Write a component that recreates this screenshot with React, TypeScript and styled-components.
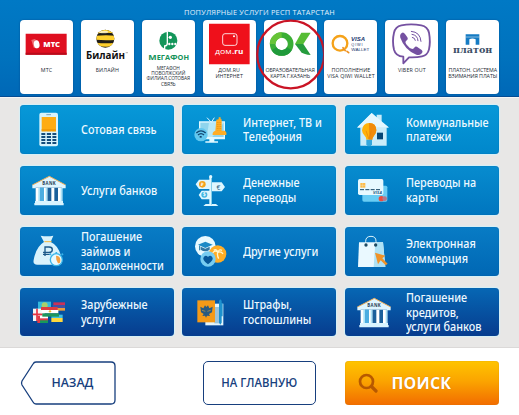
import React from "react";
import styled, { createGlobalStyle } from "styled-components";

const Global = createGlobalStyle`
  * { box-sizing: border-box; }
  body { margin: 0; background: #fff; font-family: "Open Sans", "Noto Sans", sans-serif; }
`;

const Screen = styled.main`
  width: 519px;
  height: 415px;
  display: flex;
  flex-direction: column;
  overflow: hidden;
`;

const Popular = styled.header`
  height: 97px;
  flex: none;
  padding: 7px 20px 0;
  background: linear-gradient(#0079c5, #0072bd 60%, #0068b7);
  border-bottom: 1.5px solid #064c93;
`;

const PopularTitle = styled.h1`
  margin: 0 0 3px;
  height: 10px;
  color: #e3f1fc;
  font-size: 7.4px;
  line-height: 10px;
  font-weight: 500;
  letter-spacing: 0.19px;
  text-align: center;
`;

const CardRow = styled.div`
  display: grid;
  grid-template-columns: repeat(8, 53px);
  column-gap: 7.9px;
`;

const Card = styled.article`
  position: relative;
  height: 74px;
  background: #fff;
  border-radius: 4px;
  box-shadow: 0 0 2px #004d91;
`;

const Logo = styled.svg`
  display: block;
  width: 53px;
  height: 46.4px;
`;

const Caption = styled.p<{ $spacing: number; $dense?: boolean }>`
  margin: ${(p) => (p.$dense ? "-0.5px" : "0.7px")} -3px 0;
  color: #222a33;
  font-size: ${(p) => (p.$dense ? 4.8 : 5.3)}px;
  line-height: ${(p) => (p.$dense ? 5.2 : 6.3)}px;
  letter-spacing: ${(p) => p.$spacing}px;
  text-align: center;
  white-space: pre;
`;

const Ring = styled.svg`
  position: absolute;
  left: -6px;
  top: -2px;
  width: 70px;
  height: 74px;
  overflow: visible;
`;

const Services = styled.section`
  height: 251px;
  flex: none;
  padding: 7.3px 20.2px 0;
  background: #e8e7e6;
  border-top: 1px solid #f5f5f5;
  border-bottom: 1px solid #dbd9d8;
  display: grid;
  grid-template-columns: repeat(3, 154px);
  grid-auto-rows: 48.5px;
  column-gap: 8.3px;
  row-gap: 12.4px;
`;

const tones = [
  ["#0798d8", "#0087cb"],
  ["#078ccf", "#0076bf"],
  ["#087cc5", "#0067b4"],
  ["#0667b4", "#073c8e"],
];

const Tile = styled.button<{ $row: number }>`
  display: flex;
  align-items: center;
  padding: 0;
  border: 0;
  border-radius: 4px;
  background: linear-gradient(${(p) => tones[p.$row][0]}, ${(p) => tones[p.$row][1]});
  box-shadow: inset 0 0 1px #004f9b, 0 0 1px 0.5px #d5f0f7;
  text-align: left;
`;

const TileIcon = styled.svg`
  flex: none;
  width: 61px;
  height: 49px;
`;

const TileLabel = styled.span`
  padding-top: 1.4px;
  color: #eef9ff;
  font-family: "Noto Sans", "Open Sans", sans-serif;
  font-size: 12px;
  font-weight: 500;
  line-height: 14.7px;
  white-space: pre;
  transform: scaleX(0.9);
  transform-origin: left center;
`;

const Actions = styled.nav`
  flex: 1;
  display: flex;
  padding: 13px 20px 0;
`;

const OutlineButton = styled.button`
  flex: none;
  width: 113px;
  height: 44px;
  margin: 0 29px 0 87px;
  padding: 0;
  border: 1.5px solid #173f7e;
  border-radius: 5px;
  background: #fff;
  color: #173f7e;
  font: 600 12.3px/1 "Open Sans", sans-serif;
`;

const ButtonText = styled.span`
  display: inline-block;
  white-space: nowrap;
  transform: scaleX(0.92);
`;

const BackButton = styled.button`
  position: relative;
  flex: none;
  width: 96px;
  height: 44px;
  padding: 0 0 0 9px;
  border: 0;
  background: none;
  color: #173f7e;
  font: 600 12.3px/1 "Open Sans", sans-serif;
`;

const BackOutline = styled.svg`
  position: absolute;
  inset: 0;
  width: 96px;
  height: 44px;
`;

const SearchButton = styled.button`
  flex: none;
  width: 154px;
  height: 44px;
  display: flex;
  align-items: center;
  gap: 13.5px;
  padding: 0 0 0 13px;
  border: 0;
  border-radius: 4px;
  background: linear-gradient(#ffc400, #fba500 45%, #f26c00);
  box-shadow: inset 0 0 1px #c27a00;
  color: #fff;
  font: 700 16px/1 "Open Sans", sans-serif;
  letter-spacing: 0.2px;
  text-shadow: 0 0 1px #c86500;
`;

const SearchIcon = styled.svg`
  width: 20px;
  height: 20px;
`;

const SANS = "Open Sans, sans-serif";

/* Provider logos share a 159 x 139 canvas. */
const MtsLogo = () => (
  <>
    <path fill="#df0f20" d="M17 41h123v63H17z" />
    <path fill="#b90b1b" d="M17 98h123v6H17z" />
    <path fill="#ee6a70" d="M34 60l10-3 9 6-2 22-10-2z" />
    <ellipse cx="50" cy="73" rx="8.500" ry="12" fill="#fff" transform="rotate(-12 50 73)" />
    <text x="70" y="80" fill="#fff" fontFamily={SANS} fontWeight="800" fontSize="19" textLength="50" lengthAdjust="spacingAndGlyphs">МТС</text>
  </>
);

const BeelineLogo = () => (
  <>
    <clipPath id="bee"><circle cx="73" cy="56" r="27" /></clipPath>
    <g clipPath="url(#bee)">
      <path fill="#211e18" d="M40 25h70v65H40z" />
      <path fill="#ffd02d" d="M40 32q33-7 70 0v9q-35-6-70 0zM40 48q35-4 70 0v11q-35 4-70 0zM40 67q35 6 70 0v9q-35 8-70 0z" />
      <ellipse cx="68" cy="36" rx="14" ry="4" fill="#fff" opacity=".65" />
    </g>
    <text x="15" y="117" fill="#111" fontFamily={SANS} fontWeight="700" fontSize="32" textLength="117" lengthAdjust="spacingAndGlyphs">Билайн</text>
    <path stroke="#111" d="M134 98h7" />
  </>
);

const MegafonLogo = () => (
  <>
    <circle cx="79" cy="62" r="27" fill="#13965a" />
    <path d="M76 35v35a8 8 0 0 1-8 8v10" stroke="#fff" strokeWidth="4" fill="none" />
    <circle cx="85" cy="52" r="5" fill="#fff" />
    <g fill="#fff"><circle cx="82" cy="72" r="3.500" /><circle cx="91" cy="72" r="3.500" /><circle cx="100" cy="72" r="3.500" /></g>
    <text x="19" y="119" fill="#15925a" fontFamily={SANS} fontWeight="700" fontSize="23" textLength="122" lengthAdjust="spacingAndGlyphs">М<tspan fontSize="19">ЕГА</tspan>Ф<tspan fontSize="19">ОН</tspan></text>
  </>
);

const DomLogo = () => (
  <>
    <path fill="#ef101b" d="M18 11h122v122H18z" />
    <rect x="59" y="41" width="43" height="35" rx="7" fill="none" stroke="#fff" strokeWidth="2.500" />
    <circle cx="93" cy="49" r="3" fill="#fff" />
    <text x="36" y="101" fill="#fff" fontFamily={SANS} fontSize="23" textLength="50" lengthAdjust="spacingAndGlyphs">дом</text>
    <text x="87" y="101" fill="#fff" fontFamily={SANS} fontWeight="700" fontSize="23" textLength="34" lengthAdjust="spacingAndGlyphs">.ru</text>
  </>
);

const OkLogo = () => (
  <>
    <circle cx="53" cy="72" r="27" fill="none" stroke="#3aae35" strokeWidth="17" />
    <path d="M26 72a27 27 0 0 1 27-27" fill="none" stroke="#66c437" strokeWidth="17" />
    <path d="M76 86a27 27 0 0 1-46 0" fill="none" stroke="#209a3b" strokeWidth="17" />
    <path fill="#56bd35" d="M112 38h28l-22 34H93z" />
    <path fill="#269c3d" d="M93 72h25l22 33q-20-1-28-8z" />
  </>
);

const QiwiLogo = () => (
  <>
    <circle cx="48" cy="70" r="22" fill="none" stroke="#f5a219" strokeWidth="7" />
    <path stroke="#fff" strokeWidth="3" d="M55 80l11 13" />
    <path stroke="#ed9020" strokeWidth="5" strokeLinecap="round" d="M57 83l7 9M69 94l5 4" />
    <g fill="#22386f" fontFamily="Liberation Sans, sans-serif" fontWeight="700">
      <text x="81" y="62" fontSize="17" fontStyle="italic" textLength="42" lengthAdjust="spacingAndGlyphs">VISA</text>
      <text x="82" y="79" fontSize="11.500" fontWeight="400" textLength="34">QIWI</text>
      <text x="82" y="94" fontSize="11.500" fontWeight="400" textLength="54" lengthAdjust="spacingAndGlyphs">WALLET</text>
    </g>
  </>
);

const ViberLogo = () => (
  <>
    <path d="M49 16q29-6 60 0 19 4 23 22 5 28 0 50-4 17-21 21-16 4-39 3L55 130v-20q-23-2-28-21-6-26 0-51 4-18 22-22z" fill="#fff" stroke="#7551a1" strokeWidth="5.500" strokeLinejoin="round" />
    <path d="M47 42q7-9 13 0l7 10q4 6-4 11-4 4 2 11 8 11 17 13 4 0 7-5 3-5 11 1l10 7q6 5-2 12-5 5-14 2-35-14-48-51-2-6 1-11z" fill="#7551a1" />
    <path d="M79 34q27 2 29 30M81 43q17 2 18 19M82 52q8 1 9 9" fill="none" stroke="#7551a1" strokeWidth="3" strokeLinecap="round" />
  </>
);

const PlatonLogo = () => (
  <>
    <path fill="#157bc3" d="M59 43h41v31H89V58q-10-5-19 0v16H59z" />
    <path stroke="#fff" strokeWidth="1.500" d="M59 51h41" />
    <text x="21" y="99" fill="#3c4f66" fontFamily="DejaVu Serif, serif" fontWeight="700" fontSize="26" textLength="118" lengthAdjust="spacingAndGlyphs">платон</text>
  </>
);

/* Service icons share a 183 x 147 canvas. */
const PhoneIcon = () => (
  <>
    <rect x="58" y="23" width="56" height="101" rx="6" fill="#d8f3fc" />
    <path fill="#ffac13" d="M65 36h43v43H65z" /><path fill="#f39b08" d="M65 72h43v7H65z" />
    <path stroke="#4b7c9f" strokeWidth="2" d="M79 29h14" />
    <g fill="#164d7b">{[84, 93, 102, 111].map((y) => <path key={y} d={`M64 ${y}h12v6H64zM80 ${y}h13v6H80zM97 ${y}h12v6H97z`} />)}</g>
    <path stroke="#d8f3fc" strokeWidth="2" d="M79 80v40M95 80v40" />
  </>
);

const BankIcon = () => (
  <>
    <path fill="#dff5ff" d="M37 57L88 31l49 26v10H37z" />
    <path fill="none" stroke="#efad57" strokeWidth="3" d="M37 57l51-26 49 26" />
    <path fill="#1b609b" d="M47 65h79v44H47z" />
    <path fill="#4cade0" d="M60 65h12v44H60z" />
    <path fill="#fff" d="M47 65h13v45H47zM72 65h10v45H72zM94 65h9v45h-9zM114 65h13v45h-13z" />
    <path fill="#aae2f7" d="M55 65h5v45h-5zM77 65h5v45h-5zM122 65h5v45h-5z" />
    <path fill="#d8f4ff" d="M45 105h84v6h2v7H43v-7h2z" />
    <text x="67" y="58" fill="#263c52" fontFamily={SANS} fontSize="13" fontWeight="700" textLength="40">BANK</text>
  </>
);

const InternetIcon = () => (
  <>
    <path fill="#e0f8ff" d="M51 49h78v54H51zM82 103h15v6h11v4H70v-4h12z" />
    <path fill="#8fd5ed" d="M55 53h70v43H55z" /><path fill="#b7e9f7" d="M81 53h44L91 96H74z" />
    <path d="M75 38l13 14 9-14" stroke="#d9f4ff" strokeWidth="3" fill="none" />
    <path fill="#ffad24" d="M103 44l7-1v-6h6v6h3v34h9q7 3 5 13H92q-2-9 8-13z" />
    <path stroke="#e48b00" strokeWidth="2" strokeDasharray="3 3" d="M106 51v25M111 51v25M116 51v25" />
    <circle cx="57" cy="89" r="20" fill="#62c8ef" />
    <g fill="none" stroke="#10446f" strokeWidth="4"><path d="M43 84q14-13 28 0M48 90q9-8 18 0" /><path strokeWidth="6" d="M56 93v5" /></g>
  </>
);

const HouseIcon = () => (
  <>
    <path fill="#caecf9" d="M36 68L80 24l15 14v-9h15v23l22 16h-7v54H46V68z" />
    <path fill="#e3f7ff" d="M37 67L80 24l51 43H37z" />
    <path fill="#064675" d="M96 83h18v20H96z" />
    <path fill="#ffb20a" d="M72 54q21-1 22 22 0 9-7 16-5 6-5 12H64q0-7-5-12-8-8-8-16 2-21 21-22z" />
    <path fill="#f18b0a" d="M72 54q22 0 22 22 0 9-7 16-5 6-5 12h-9z" />
    <path fill="none" stroke="#e77f08" strokeWidth="2" d="M63 77l9 26 7-26" />
    <path fill="#35a7dc" d="M64 104h17v14l-4 6h-9l-4-6z" />
  </>
);

const SignpostIcon = () => (
  <>
    <circle cx="86" cy="32" r="5" fill="#dff7ff" />
    <path fill="#def7ff" d="M82 34h8v80h12l7 6H64l7-6h11zM51 41h33v28H51L41 55zM86 49h33l10 14-10 13H86zM59 74h25v26H59l-9-13z" />
    <path fill="#83cfe9" d="M87 36h3v80h-3z" />
    <circle cx="61" cy="55" r="10" fill="#f5a31c" /><circle cx="67" cy="86" r="9" fill="#44b7e4" />
    <g fontFamily={SANS} fontWeight="700" textAnchor="middle"><text x="61" y="60" fontSize="13" fill="#fff">₽</text><text x="109" y="71" fontSize="20" fontWeight="500" fill="#285c7d">€</text><text x="67" y="91" fontSize="14" fill="#fff">$</text></g>
  </>
);

const CardsIcon = () => (
  <>
    <rect x="52" y="59" width="75" height="48" rx="5" fill="#69cdf4" />
    <circle cx="109" cy="98" r="8" fill="#ec4d3e" /><circle cx="119" cy="98" r="7" fill="#b6788c" />
    <rect x="39" y="39" width="76" height="48" rx="5" fill="#e7f9ff" />
    <path fill="#ffbb43" d="M46 51h15v14H46z" /><path stroke="#e5f0ef" d="M46 58h15M53 51v14" />
    <path stroke="#164664" strokeWidth="3" strokeDasharray="12 4" d="M45 71h62" />
    <text x="84" y="84" fill="#15527d" fontFamily={SANS} fontStyle="italic" fontWeight="700" fontSize="12" textLength="27">VISA</text>
  </>
);

const MoneyIcon = () => (
  <>
    <path fill="#d8f2fc" d="M62 26q20 4 38 0l-8 19q26 11 34 54 3 14-11 14H52q-14 0-11-14 7-40 31-54z" />
    <path stroke="#f5b73b" strokeWidth="3" d="M73 44h22" />
    <path fill="none" stroke="#1d5989" strokeWidth="4" d="M75 87V60h12q10 0 10 8t-10 8H69M69 82h24" />
    <circle cx="109" cy="98" r="20" fill="#38b4e8" /><circle cx="109" cy="98" r="16" fill="#e7faff" />
    <path fill="#f3a044" d="M109 98l-1-12q12 0 13 12t-7 11z" /><path stroke="#38b4e8" strokeWidth="5" d="M109 75v6M93 80l-4 4M125 80l4 4" />
  </>
);

const OtherIcon = () => (
  <>
    <circle cx="70" cy="58" r="31" fill="#e8faff" />
    <path fill="#1b8ac6" d="M48 53l22-9 22 9-22 10z" /><path fill="#3277a2" d="M56 59l14 6 13-6v9q-13 10-27 0z" />
    <path stroke="#1872a4" strokeWidth="3" d="M53 56v14" />
    <circle cx="107" cy="81" r="26" fill="#ffad26" />
    <path fill="none" stroke="#fff4c9" strokeWidth="4" d="M107 75q-2 11 3 20M108 76q-10-8-16 2M108 76q-5-12-13-6M108 76q3-11 12-6M108 76q10-4 15 5" />
    <circle cx="78" cy="96" r="23" fill="#77cdf1" />
    <path fill="#07599a" d="M78 112q-20-15-12-23 6-6 12 1 6-7 12-1 8 8-12 23z" />
  </>
);

const BagIcon = () => (
  <>
    <path fill="#eaf9ff" d="M42 46h72l7 74H39z" /><path fill="#aee2f5" d="M91 46h23l7 74H86z" />
    <path fill="none" stroke="#d7f2fb" strokeWidth="3" d="M62 55V43q0-15 16-15 15 0 15 15v12" />
    <circle cx="63" cy="54" r="5" fill="#1f4b63" /><circle cx="92" cy="54" r="5" fill="#1f4b63" />
    <path fill="#ef9228" d="M90 77l31 9-9 8 16 16-6 5-15-15-8 12z" />
  </>
);

const FlagsIcon = () => (
  <>
    <path fill="#34b9dd" d="M54 41h39v25H54z" /><circle cx="74" cy="52" r="9" fill="#a8cf6a" />
    <path fill="#c93157" d="M100 43h35v8h-35z" /><path fill="#4351a5" d="M98 51h37v9H98z" /><path fill="#e99b3c" d="M98 60h37v8H98z" />
    <path fill="#f5f7f5" d="M39 62h35v37H39z" /><path stroke="#e73543" strokeWidth="5" d="M38 79h30M51 62v37" />
    <path fill="#3fbfe3" d="M94 80h34v10H94z" /><path fill="#ffd83c" d="M94 90h34v12H94z" />
    <path fill="#e13a46" d="M52 83h32v22H52z" /><path fill="#fff" d="M60 83h24v8H60z" /><path fill="#17995b" d="M60 97h24v8H60z" />
    <path fill="#dd3c41" d="M63 57h50v9H63z" /><path fill="#fff" d="M65 66h50v10H65z" /><path fill="#20965b" d="M67 76h50v10H67z" /><circle cx="90" cy="70" r="3.500" fill="#edb831" />
  </>
);

const FinesIcon = () => (
  <>
    <path fill="#e3f5fc" d="M70 47h54v65H70z" /><path fill="#9bc4db" d="M97 57h16v49H97z" />
    <path fill="#f49a18" d="M46 37h53v66H46z" />
    <path fill="#285a80" d="M55 56l9 5 5-9 4 5 5-5 4 9 10-5-2 17-9 5 3 6-9-1-3 6-3-6-8 1 4-6-8-5z" />
    <path stroke="#ffb02a" strokeWidth="1.500" d="M60 67l10 3M86 67l-10 3" />
    <path fill="#1d91ce" d="M111 38l4-4 4 4v7h3v40h-3v19l-4 6-4-6z" />
  </>
);

const providers = [
  { logo: MtsLogo, caption: "МТС", spacing: 0.1 },
  { logo: BeelineLogo, caption: "БИЛАЙН", spacing: 0.2 },
  { logo: MegafonLogo, caption: "МЕГАФОН\nПОВОЛЖСКИЙ\nФИЛИАЛ.СОТОВАЯ\nСВЯЗЬ", spacing: -0.08, dense: true },
  { logo: DomLogo, caption: "ДОМ.RU\nИНТЕРНЕТ", spacing: 0.1 },
  { logo: OkLogo, caption: "ОБРАЗОВАТЕЛЬНАЯ\nКАРТА Г.КАЗАНЬ", spacing: -0.15, ringed: true },
  { logo: QiwiLogo, caption: "ПОПОЛНЕНИЕ\nVISA QIWI WALLET", spacing: 0.15 },
  { logo: ViberLogo, caption: "VIBER OUT", spacing: 0.15 },
  { logo: PlatonLogo, caption: "ПЛАТОН. СИСТЕМА\nВЗИМАНИЯ ПЛАТЫ", spacing: -0.05 },
];

const services = [
  { icon: PhoneIcon, label: "Сотовая связь" },
  { icon: InternetIcon, label: "Интернет, ТВ и\nТелефония" },
  { icon: HouseIcon, label: "Коммунальные\nплатежи" },
  { icon: BankIcon, label: "Услуги банков" },
  { icon: SignpostIcon, label: "Денежные\nпереводы" },
  { icon: CardsIcon, label: "Переводы на\nкарты" },
  { icon: MoneyIcon, label: "Погашение\nзаймов и\nзадолженности" },
  { icon: OtherIcon, label: "Другие услуги" },
  { icon: BagIcon, label: "Электронная\nкоммерция" },
  { icon: FlagsIcon, label: "Зарубежные\nуслуги" },
  { icon: FinesIcon, label: "Штрафы,\nгоспошлины" },
  { icon: BankIcon, label: "Погашение\nкредитов,\nуслуги банков" },
];

export default function App() {
  return (
    <Screen>
      <Global />
      <Popular>
        <PopularTitle>ПОПУЛЯРНЫЕ УСЛУГИ РЕСП ТАТАРСТАН</PopularTitle>
        <CardRow>
          {providers.map(({ logo: Drawing, caption, spacing, ringed, dense }) => (
            <Card key={caption}>
              <Logo viewBox="0 0 159 139"><Drawing /></Logo>
              <Caption $spacing={spacing} $dense={dense}>{caption}</Caption>
              {ringed && <Ring viewBox="0 0 70 74"><ellipse cx="32.700" cy="36.500" rx="33.500" ry="33.800" fill="none" stroke="#ca1425" strokeWidth="2.300" /></Ring>}
            </Card>
          ))}
        </CardRow>
      </Popular>
      <Services>
        {services.map(({ icon: Drawing, label }, index) => (
          <Tile key={label} $row={Math.floor(index / 3)}>
            <TileIcon viewBox="0 0 183 147"><Drawing /></TileIcon>
            <TileLabel>{label}</TileLabel>
          </Tile>
        ))}
      </Services>
      <Actions>
        <BackButton>
          <BackOutline viewBox="0 0 96 44"><path d="M16 1h75q4 0 4 4v34q0 4-4 4H16q-2 0-3-2L2 24q-1-2 0-4L13 3q1-2 3-2z" fill="none" stroke="#173f7e" strokeWidth="1.300" /></BackOutline>
          НАЗАД
        </BackButton>
        <OutlineButton><ButtonText>НА ГЛАВНУЮ</ButtonText></OutlineButton>
        <SearchButton>
          <SearchIcon viewBox="0 0 20 20" fill="none" stroke="#b75900" strokeWidth="2.700"><circle cx="8.500" cy="8.500" r="6.500" /><path strokeLinecap="round" strokeWidth="3.200" d="M13.500 13.500l4.500 4.500" /></SearchIcon>
          ПОИСК
        </SearchButton>
      </Actions>
    </Screen>
  );
}
